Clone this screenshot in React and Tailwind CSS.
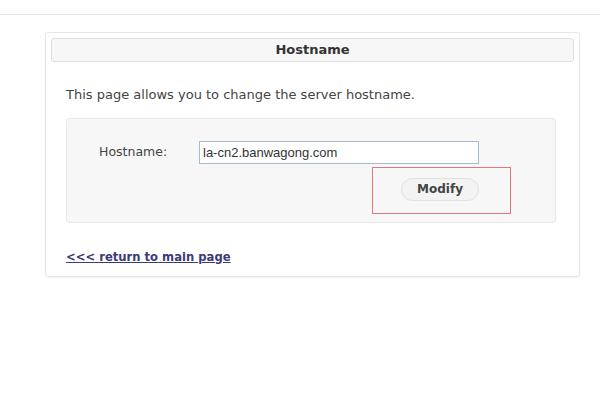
import React, { useState } from 'react';

function App() {
  const [hostname, setHostname] = useState('la-cn2.banwagong.com');

  return (
    <div className="w-[600px] h-[393px] bg-white font-['DejaVu_Sans',sans-serif] text-[#444]">
      <div className="h-[15px] border-b border-[#e8e8e8]" />

      <div className="ml-[45px] mt-[17px] w-[535px] rounded-[3px] border border-[#e6e6e6] p-[5px] pb-[10px] shadow-[0_1px_2px_rgba(0,0,0,0.05)]">
        <div className="h-[24px] rounded-[3px] border border-[#e0e0e0] bg-[#f7f7f7] flex items-center justify-center">
          <h2 className="text-[13px] font-bold text-[#333]">Hostname</h2>
        </div>

        <p className="mt-[23px] ml-[15px] text-[13px] text-[#444]">
          This page allows you to change the server hostname.
        </p>

        <div className="mt-[13px] ml-[15px] w-[490px] h-[105px] rounded-[3px] border border-[#e8e8e8] bg-[#f7f7f7]">
          <div className="flex items-center pt-[22px]">
            <label className="ml-[32px] w-[100px] text-[12.5px] text-[#444]">Hostname:</label>
            <input
              value={hostname}
              onChange={(e) => setHostname(e.target.value)}
              className="h-[23px] w-[280px] border border-[#a8b8d8] bg-white px-[3px] text-[13px] font-['Liberation_Sans',sans-serif] text-[#333] outline-none"
            />
          </div>
          <div className="ml-[305px] mt-[3px] w-[139px] h-[47px] border-[1.5px] border-[#e07a7a] flex items-center justify-center">
            <button className="w-[78px] h-[23px] rounded-full border border-[#e2e2e2] bg-[#f3f3f3] text-[12px] font-bold text-[#444] ml-[-3px] mt-[-2px]">
              Modify
            </button>
          </div>
        </div>

        <a href="#" className="block mt-[26px] ml-[15px] text-[11.6px] font-bold text-[#3b3b7a] underline">
          &lt;&lt;&lt; return to main page
        </a>
      </div>
    </div>
  );
}

export default App;
